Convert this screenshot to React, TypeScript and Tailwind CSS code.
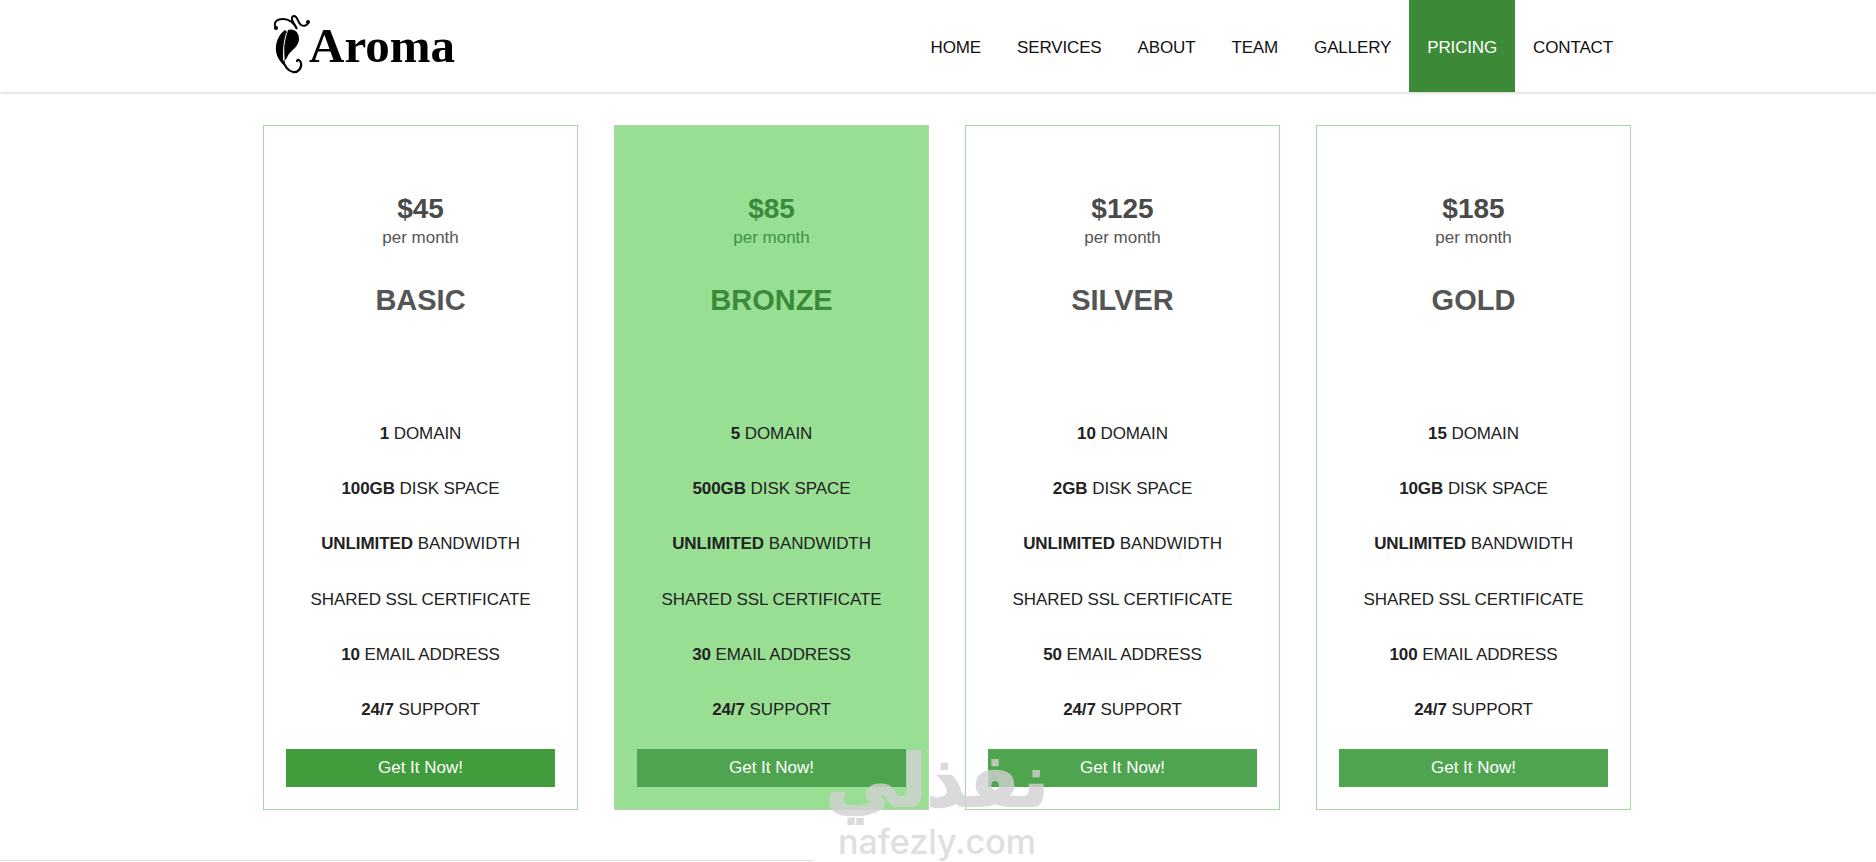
const plans = [
  { price: "$45", name: "BASIC", domain: "1", disk: "100GB", email: "10", highlighted: false },
  { price: "$85", name: "BRONZE", domain: "5", disk: "500GB", email: "30", highlighted: true },
  { price: "$125", name: "SILVER", domain: "10", disk: "2GB", email: "50", highlighted: false },
  { price: "$185", name: "GOLD", domain: "15", disk: "10GB", email: "100", highlighted: false },
];

const links = ["HOME", "SERVICES", "ABOUT", "TEAM", "GALLERY", "PRICING", "CONTACT"];

const LogoMark = () => (
  <svg viewBox="0 0 60 72" className="mt-[-4px] h-[72px] w-[60px] shrink-0" fill="none">
    <path
      d="M17 50C19 57 23 63 28 64C33 65 37 60 36 55C35 52 33 51 32 53"
      stroke="#000"
      strokeWidth="2.2"
      strokeLinecap="round"
    />
    <path
      d="M20 22C14 26 10 35 11 43C12 50 16 55 20 58C19 50 19 40 22 32C23 28 23 24 20 22Z"
      fill="#000"
    />
    <path
      d="M23 22C29 20 34 24 34 31C34 38 27 42 24 46C22 49 21 52 20 52C19 44 20 32 23 22Z"
      fill="#000"
    />
    <path d="M21.5 25C19 33 18 42 18.5 52" stroke="#fff" strokeWidth="1" strokeLinecap="round" />
    <path
      d="M11 20C8 15 11 11 18 11C24 11 29 15 32 21C29 15 24 9 29 8C33 8 32 14 36 17C39 19 43 17 43 14"
      stroke="#000"
      strokeWidth="2"
      strokeLinecap="round"
    />
    <circle cx="11" cy="20" r="2" fill="#000" />
    <circle cx="43" cy="14" r="2" fill="#000" />
  </svg>
);

const Feature = ({ bold, rest }: { bold?: string; rest: string }) => (
  <li className="h-[55.2px] leading-[55.2px] tracking-[-0.08px]">
    {bold && <b className="font-bold">{bold} </b>}
    {rest}
  </li>
);

export default function App() {
  return (
    <div className="relative h-[862px] overflow-hidden bg-white font-['Liberation_Sans',Arial,sans-serif] text-[17px]">
      <header className="h-[92px] bg-white shadow-[0_1px_3px_rgba(0,0,0,0.18)]">
        <div className="ml-[263px] flex h-full w-[1368px] items-center justify-between">
          <a className="ml-[2px] flex items-center">
            <LogoMark />
            <span className="-ml-[16px] mt-[-2px] font-['Liberation_Serif',serif] text-[49px] font-bold leading-none text-black">
              Aroma
            </span>
          </a>
          <nav className="flex h-full tracking-[-0.14px]">
            {links.map((link) => (
              <a
                key={link}
                className={
                  link === "PRICING"
                    ? "flex h-full items-center bg-[#3c8a37] px-[18px] pt-[3px] text-white"
                    : "flex h-full items-center px-[18px] pt-[3px] text-[#111]"
                }
              >
                {link}
              </a>
            ))}
          </nav>
        </div>
      </header>

      <main className="ml-[263px] mt-[33px] grid w-[1368px] grid-cols-4 gap-[36px]">
        {plans.map((plan, index) => (
          <section
            key={plan.name}
            className={
              plan.highlighted
                ? "h-[685px] border border-[#b7d3b3] bg-[#98df94] px-[22px] pt-[65px] text-center"
                : "h-[685px] border border-[#a9d4a5] bg-white px-[22px] pt-[65px] text-center"
            }
          >
            <div
              className={
                plan.highlighted
                  ? "text-[28px] font-bold leading-[36px] text-[#3b8a3b]"
                  : "text-[28px] font-bold leading-[36px] text-[#4a4a4a]"
              }
            >
              {plan.price}
            </div>
            <div
              className={
                plan.highlighted
                  ? "mt-px text-[17px] leading-[20px] text-[#3f9440]"
                  : "mt-px text-[17px] leading-[20px] text-[#555]"
              }
            >
              per month
            </div>
            <h2
              className={
                plan.highlighted
                  ? "mt-[34px] text-[29px] font-bold leading-[36px] text-[#3a8a3a]"
                  : "mt-[34px] text-[29px] font-bold leading-[36px] text-[#555]"
              }
            >
              {plan.name}
            </h2>
            <ul className="mt-[88px] text-[#222]">
              <Feature bold={plan.domain} rest="DOMAIN" />
              <Feature bold={plan.disk} rest="DISK SPACE" />
              <Feature bold="UNLIMITED" rest="BANDWIDTH" />
              <Feature rest="SHARED SSL CERTIFICATE" />
              <Feature bold={plan.email} rest="EMAIL ADDRESS" />
              <Feature bold="24/7" rest="SUPPORT" />
            </ul>
            <button
              className={
                index === 0
                  ? "mt-[12px] h-[38px] w-full bg-[#419c3c] text-white"
                  : "mt-[12px] h-[38px] w-full bg-[#4fa44f] text-white"
              }
            >
              Get It Now!
            </button>
          </section>
        ))}
      </main>

      <div className="mt-[50px] h-px w-[813px] bg-[#ddd]" />

      <div className="pointer-events-none absolute left-[826px] top-[739px] flex w-[222px] flex-col items-center text-[#d2d2d2] opacity-80">
        <span dir="rtl" className="font-['DejaVu_Sans',sans-serif] text-[73px] font-bold leading-[84px] [-webkit-text-stroke:2px_#d2d2d2]">
          نفذلي
        </span>
        <span className="font-['Inter',sans-serif] text-[34px] font-medium leading-[38px] text-[#d8d8d8]">
          nafezly.com
        </span>
      </div>
    </div>
  );
}
